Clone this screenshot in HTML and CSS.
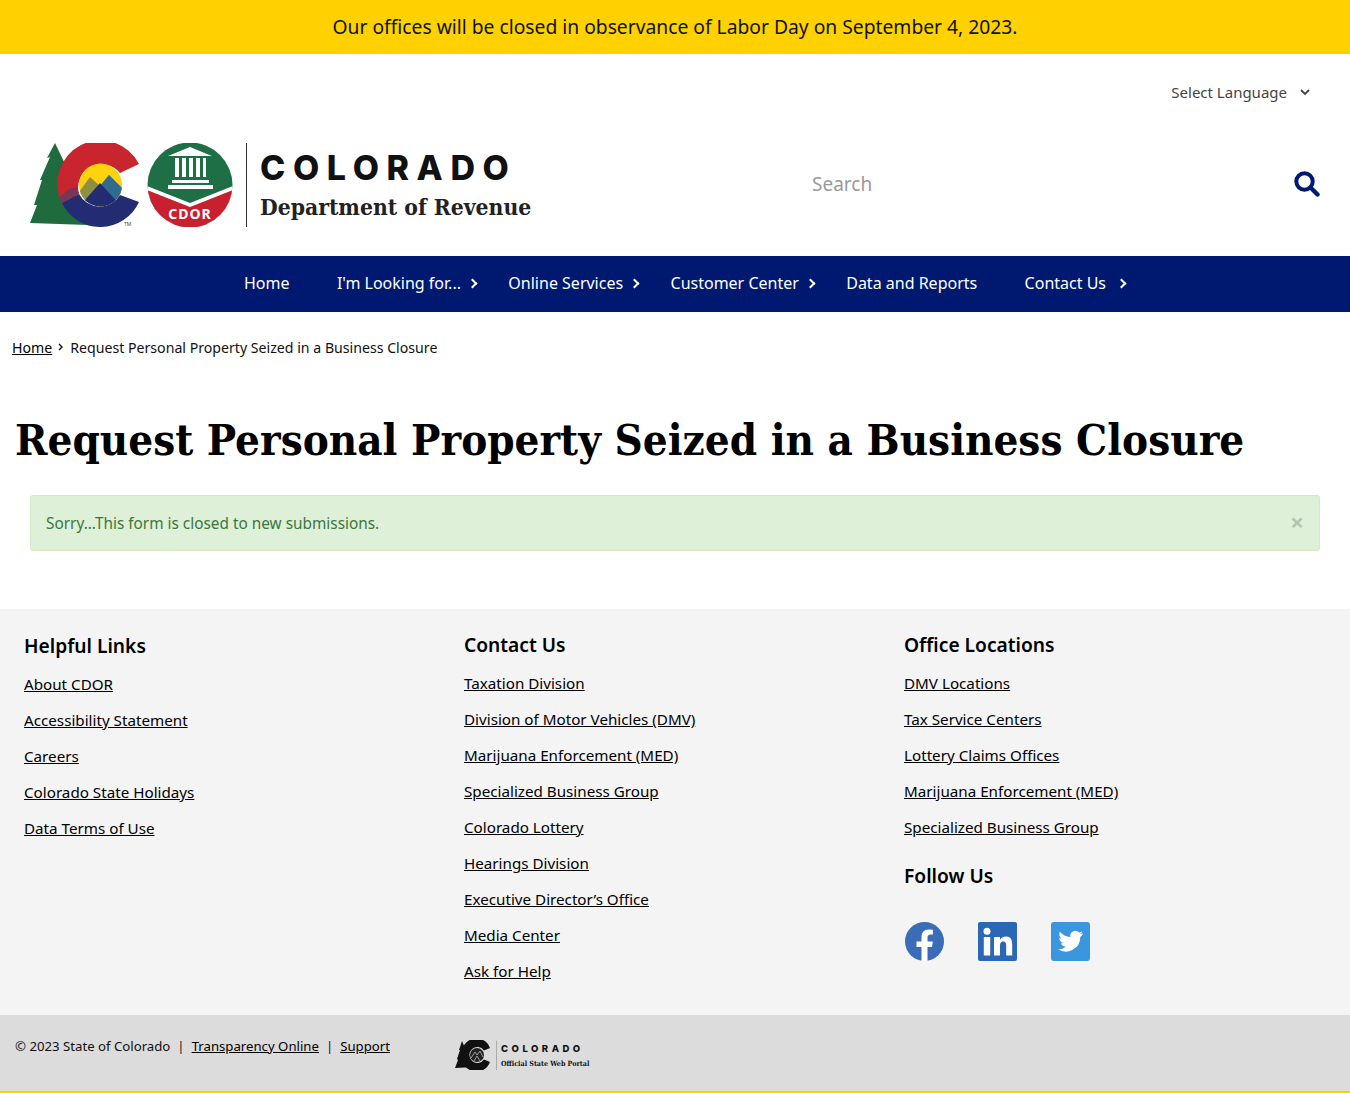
FILE: index.html
```html
<!DOCTYPE html>
<html lang="en">
<head>
    <meta charset="UTF-8">
    <title>Request Personal Property Seized in a Business Closure</title>
    <link rel="stylesheet" href="styles.css">
</head>
<body>
    <!-- Alert banner -->
    <div class="banner">Our offices will be closed in observance of Labor Day on September 4, 2023.</div>

    <header class="site-header">
        <div class="lang-row">
            <span class="lang-select">Select Language</span>
            <svg class="lang-arrow" viewBox="0 0 10 7" width="10" height="7"><path d="M1 1l4 4 4-4" fill="none" stroke="#444" stroke-width="1.8"/></svg>
        </div>
        <div class="brand-row">
            <a class="brand" href="#">
                <svg class="brand-marks" viewBox="30 143 203 84" width="203" height="84">
                    <defs>
                        <clipPath id="sunClip"><circle cx="100.500" cy="185" r="21.500"/></clipPath>
                        <clipPath id="sealClip"><circle cx="190" cy="185" r="42.500"/></clipPath>
                    </defs>
                    <path d="M55 143L66 166 63 166 72 190 88 225 30 223 37 205 34 205 42 180 40 180 50 157 47 158Z" fill="#1f6b3e"/>
                    <path d="M139 164A42.500 42.500 0 0 0 62 203L79 194A23.500 23.500 0 0 1 120 173Z" fill="#c8252f"/>
                    <path d="M62 203A42.500 42.500 0 0 0 139 202L120 195A23.500 23.500 0 0 1 79 194Z" fill="#232c73"/>
                    <path d="M62 203L79 194 77 187 69 189 60 197Z" fill="#7a3558"/>
                    <g clip-path="url(#sunClip)">
                        <rect x="78" y="163" width="45" height="44" fill="#fdd20e"/>
                        <path d="M76 196L90 177 100 186 109 175 126 192V210H76Z" fill="#8c9040"/>
                        <path d="M100 186L109 175 126 192V202H108Z" fill="#2f6c90"/>
                        <path d="M78 208L100 183 123 208Z" fill="#232c73"/>
                    </g>
                    <text class="tm" x="124" y="226">TM</text>
                    <g clip-path="url(#sealClip)">
                        <rect x="147" y="143" width="86" height="85" fill="#1f6f46"/>
                        <path d="M147 186L190 203 233 186V228H147Z" fill="#fff"/>
                        <path d="M147 190L190 207 233 190V228H147Z" fill="#c8202f"/>
                    </g>
                    <path d="M168 156L190 147 212 156Z" fill="#fff"/>
                    <path d="M175 158h4v19h-4zM182 158h4v19h-4zM189 158h4v19h-4zM196 158h4v19h-4zM203 158h3v19h-3zM172 180h37v3h-37zM168 185h45v4h-45z" fill="#fff"/>
                    <text class="seal-name" x="190" y="219">CDOR</text>
                </svg>
                <span class="brand-text">
                    <span class="brand-state">COLORADO</span>
                    <span class="brand-dept">Department of Revenue</span>
                </span>
            </a>
            <form class="search-box">
                <input class="search-input" type="text" placeholder="Search">
                <svg viewBox="0 0 26 26" width="26" height="26"><circle cx="10.500" cy="10.500" r="8.200" fill="none" stroke="#001970" stroke-width="4"/><path d="M16.500 16.500l7 7" stroke="#001970" stroke-width="4.400" stroke-linecap="round"/></svg>
            </form>
        </div>
    </header>

    <!-- Navigation bar -->
    <nav class="main-nav">
        <a href="#">Home</a>
        <a href="#" class="has-sub">I'm Looking for...</a>
        <a href="#" class="has-sub">Online Services</a>
        <a href="#" class="has-sub">Customer Center</a>
        <a href="#">Data and Reports</a>
        <a href="#" class="has-sub last">Contact Us</a>
    </nav>

    <div class="breadcrumb">
        <a href="#">Home</a>
        <svg viewBox="0 0 6 8" width="6" height="8"><path d="M1 1l3 3-3 3" fill="none" stroke="#111" stroke-width="1.400"/></svg>
        <span>Request Personal Property Seized in a Business Closure</span>
    </div>

    <h1 class="page-title">Request Personal Property Seized in a Business Closure</h1>

    <div class="alert">
        <span>Sorry...This form is closed to new submissions.</span>
        <span class="alert-close">×</span>
    </div>

    <footer class="site-footer">
        <div class="footer-col first">
            <h3>Helpful Links</h3>
            <a href="#">About CDOR</a>
            <a href="#">Accessibility Statement</a>
            <a href="#">Careers</a>
            <a href="#">Colorado State Holidays</a>
            <a href="#">Data Terms of Use</a>
        </div>
        <div class="footer-col">
            <h3>Contact Us</h3>
            <a href="#">Taxation Division</a>
            <a href="#">Division of Motor Vehicles (DMV)</a>
            <a href="#">Marijuana Enforcement (MED)</a>
            <a href="#">Specialized Business Group</a>
            <a href="#">Colorado Lottery</a>
            <a href="#">Hearings Division</a>
            <a href="#">Executive Director’s Office</a>
            <a href="#">Media Center</a>
            <a href="#">Ask for Help</a>
        </div>
        <div class="footer-col">
            <h3>Office Locations</h3>
            <a href="#">DMV Locations</a>
            <a href="#">Tax Service Centers</a>
            <a href="#">Lottery Claims Offices</a>
            <a href="#">Marijuana Enforcement (MED)</a>
            <a href="#">Specialized Business Group</a>
            <h3 class="follow-title">Follow Us</h3>
            <div class="social">
                <svg viewBox="0 0 39 39" width="39" height="39"><circle cx="19.500" cy="19.500" r="19.500" fill="#3b6cb7"/><path d="M16.500 39V25h-5v-5.600h5v-4.200c0-5 3-7.700 7.400-7.700 2.200 0 4 .3 4 .3v4.800h-2.300c-2.400 0-3.100 1.500-3.100 3v3.800h5.300l-.9 5.600h-4.400v14z" fill="#fff"/></svg>
                <svg viewBox="0 0 39 39" width="39" height="39"><rect width="39" height="39" rx="2" fill="#2a67b5"/><circle cx="9" cy="9.300" r="3.500" fill="#fff"/><path d="M5.800 15h6.400v18.500H5.800zM16 15h6v2.800c1-1.800 3-3.300 6-3.300 5.500 0 6.200 4 6.200 9v10h-6v-9c0-2.400-.1-5-3-5s-3.200 2.500-3.200 5v9H16z" fill="#fff"/></svg>
                <svg viewBox="0 0 39 39" width="39" height="39"><rect width="39" height="39" rx="3" fill="#3a97dd"/><path d="M32 11.300c-.9.400-1.900.700-2.900.800 1-.600 1.800-1.600 2.200-2.800-1 .6-2.100 1-3.200 1.200a5.100 5.100 0 0 0-8.700 4.600c-4.200-.2-8-2.200-10.500-5.300a5.100 5.100 0 0 0 1.600 6.800c-.8 0-1.600-.2-2.300-.6v.1c0 2.500 1.800 4.500 4.100 5-.8.200-1.600.2-2.300.1.600 2 2.500 3.500 4.800 3.500A10.300 10.300 0 0 1 7 27.300 14.500 14.500 0 0 0 29.300 15c1-.7 1.900-1.600 2.700-3.700z" fill="#fff"/></svg>
            </div>
        </div>
    </footer>

    <div class="bottom-bar">
        <div class="bottom-links">
            <span>© 2023 State of Colorado</span>
            <span>|</span>
            <a href="#">Transparency Online</a>
            <span>|</span>
            <a href="#">Support</a>
        </div>
        <div class="portal-logo">
            <svg viewBox="0 0 37 30" width="37" height="30"><path d="M7 1L10 8 12 18 20 27 0 28 3 20 2 19 5 10 4 10Z" fill="#111"/><path d="M35 8A14.500 14.500 0 0 0 7 15 14.500 14.500 0 0 0 35 22L29 19.500A8 8 0 1 1 29 10.500Z" fill="#111"/><circle cx="22" cy="15" r="7" fill="#222"/><path d="M16 18l4-6 2 3 3-4 3 6M19 21l3-5 3 5" fill="none" stroke="#bbb" stroke-width=".8"/></svg>
            <span class="portal-text">
                <span class="portal-state">COLORADO</span>
                <span class="portal-sub">Official State Web Portal</span>
            </span>
        </div>
    </div>
</body>
</html>
```

FILE: styles.css
```css
/* Basic page styling */
body {
    margin: 0;
    font-family: "Noto Sans", sans-serif;
    font-size: 15px;
    color: #111;
    background: #fff;
}

a {
    color: #000;
}

/* Top banner */
.banner {
    height: 54px;
    line-height: 54px;
    background: #ffd100;
    text-align: center;
    font-size: 19.270px;
}

/* Header */
.site-header {
    height: 202px;
    padding: 0 30px;
    box-sizing: border-box;
}

.lang-row {
    height: 89px;
    padding: 0 10px 13px 0;
    display: flex;
    justify-content: flex-end;
    align-items: center;
    gap: 13px;
    color: #444;
    box-sizing: border-box;
}

.brand-row {
    display: flex;
    justify-content: space-between;
    align-items: flex-start;
}

.brand {
    display: flex;
    text-decoration: none;
}

.brand-text {
    display: flex;
    flex-direction: column;
    margin-left: 13px;
    padding-left: 13px;
    border-left: 1.500px solid #333;
    height: 84px;
    box-sizing: border-box;
}

.brand-state {
    font-family: Inter, sans-serif;
    font-weight: 800;
    font-size: 34px;
    line-height: 50px;
    letter-spacing: 7.600px;
    color: #111;
}

.brand-dept {
    font-family: "DejaVu Serif Condensed", "DejaVu Serif", serif;
    font-weight: 700;
    font-size: 22.700px;
    line-height: 28px;
    color: #222;
}

.tm {
    font-family: "Noto Sans", sans-serif;
    font-size: 5px;
    fill: #444;
}

.seal-name {
    font-family: "Noto Sans", sans-serif;
    font-weight: 700;
    font-size: 14px;
    letter-spacing: 1px;
    fill: #fff;
    text-anchor: middle;
}

.search-box {
    width: 508px;
    display: flex;
    justify-content: space-between;
    align-items: center;
    padding-top: 28px;
}

.search-input {
    border: none;
    outline: none;
    padding: 0;
    font-family: inherit;
    font-size: 19px;
    width: 300px;
}

.search-input::placeholder {
    color: #999;
}

/* Main navigation */
.main-nav {
    height: 56px;
    padding-bottom: 2px;
    box-sizing: border-box;
    background: #001970;
    display: flex;
    justify-content: center;
    align-items: center;
    gap: 47.400px;
}

.main-nav a {
    color: #fff;
    text-decoration: none;
    font-size: 16px;
}

.main-nav a.has-sub {
    position: relative;
}

/* chevron after the links with submenus */
.main-nav a.has-sub::after {
    content: "";
    position: absolute;
    right: -15px;
    top: 8px;
    width: 5px;
    height: 5px;
    border-top: 2px solid #fff;
    border-right: 2px solid #fff;
    transform: rotate(45deg);
}

.main-nav a.last::after {
    right: -19px;
}

/* Breadcrumb */
.breadcrumb {
    padding: 24px 12px 0;
    display: flex;
    align-items: center;
    gap: 6px;
    font-size: 14.150px;
    height: 46px;
    box-sizing: border-box;
}

.page-title {
    margin: 0;
    padding: 52px 15px 0;
    height: 137px;
    box-sizing: border-box;
    font-family: "DejaVu Serif Condensed", "DejaVu Serif", serif;
    font-weight: 700;
    font-size: 43.500px;
    line-height: 60px;
    color: #000;
    white-space: nowrap;
}

/* Alert box */
.alert {
    margin: 0 30px;
    height: 56px;
    padding: 0 15px;
    display: flex;
    justify-content: space-between;
    align-items: center;
    box-sizing: border-box;
    background: #dff0d8;
    border: 1px solid #d6e9c6;
    border-radius: 3px;
    color: #3c763d;
    font-size: 15.360px;
}

.alert-close {
    font-size: 24px;
    font-weight: 700;
    color: #b4c4ae;
    margin-bottom: 3px;
}

/* Footer */
.site-footer {
    margin-top: 58px;
    height: 406px;
    box-sizing: border-box;
    padding: 23px 0 0 24px;
    background: #f4f4f4;
    display: grid;
    grid-template-columns: 440px 440px 1fr;
}

.footer-col {
    display: flex;
    flex-direction: column;
    align-items: flex-start;
}

.footer-col.first {
    padding-top: 1px;
}

.footer-col h3 {
    margin: 0 0 13px;
    font-size: 19.200px;
    line-height: 26px;
    font-weight: 600;
    color: #000;
}

.footer-col a {
    font-size: 15.200px;
    line-height: 24px;
    margin-bottom: 12px;
}

.footer-col h3.follow-title {
    margin-top: 12px;
    margin-bottom: 33px;
}

.social {
    display: flex;
    gap: 34px;
    padding-left: 1px;
}

/* Bottom bar */
.bottom-bar {
    height: 78px;
    background: #dcdcdc;
    border-bottom: 2px solid #ffd100;
    box-sizing: border-box;
    display: flex;
    align-items: flex-start;
    padding: 22px 0 0 15px;
    font-size: 13.200px;
}

.bottom-links {
    width: 440px;
    display: flex;
    gap: 7px;
}

.portal-logo {
    display: flex;
    align-items: center;
    margin-top: 3px;
}

.portal-text {
    display: flex;
    flex-direction: column;
    margin-left: 4px;
    padding-left: 4px;
    border-left: 1px solid #aaa;
}

.portal-state {
    font-family: Inter, sans-serif;
    font-weight: 800;
    font-size: 9.500px;
    line-height: 16px;
    letter-spacing: 3.500px;
}

.portal-sub {
    font-family: "DejaVu Serif Condensed", "DejaVu Serif", serif;
    font-weight: 700;
    font-size: 7.100px;
    line-height: 13px;
}
```
